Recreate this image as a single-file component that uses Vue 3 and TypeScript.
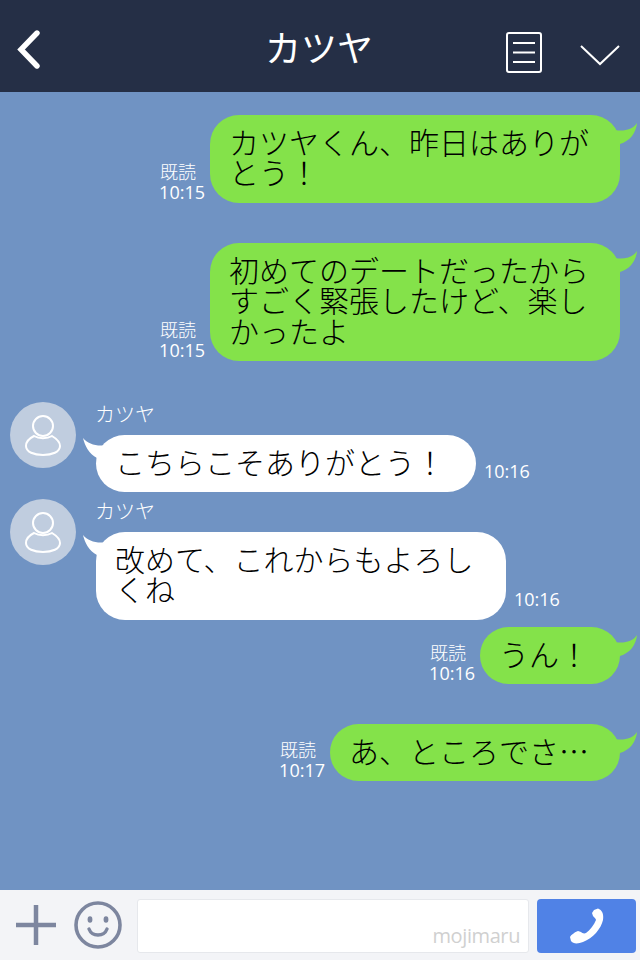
<script setup lang="ts">
interface Message {
  id: number
  mine: boolean
  text: string
  time: string
  name?: string
  gap: number
}

// gap = 前のメッセージとの間隔
const messages: Message[] = [
  { id: 1, mine: true, text: 'カツヤくん、昨日はありがとう！', time: '10:15', gap: 23 },
  { id: 2, mine: true, text: '初めてのデートだったからすごく緊張したけど、楽しかったよ', time: '10:15', gap: 40.5 },
  { id: 3, mine: false, name: 'カツヤ', text: 'こちらこそありがとう！', time: '10:16', gap: 41 },
  { id: 4, mine: false, name: 'カツヤ', text: '改めて、これからもよろしくね', time: '10:16', gap: 7 },
  { id: 5, mine: true, text: 'うん！', time: '10:16', gap: 7.5 },
  { id: 6, mine: true, text: 'あ、ところでさ…', time: '10:17', gap: 40 },
]
</script>

<template>
  <div class="screen">
    <header class="header">
      <div class="header__left">
        <svg width="26" height="40" viewBox="0 0 26 40">
          <path d="M22 3 L6 19.5 L22 36" fill="none" stroke="#fff" stroke-width="5.4" stroke-linecap="round" />
        </svg>
      </div>
      <h1 class="title">カツヤ</h1>
      <div class="header__right">
        <svg width="36" height="41" viewBox="0 0 36 41">
          <rect x="1" y="1" width="34" height="39" rx="2" fill="none" stroke="#fff" stroke-width="2" />
          <path d="M7 11 H29 M7 20.5 H29 M7 30 H29" stroke="#fff" stroke-width="2" />
        </svg>
        <svg class="chevron" width="40" height="22" viewBox="0 0 40 22">
          <path d="M1 2 L20 20 L39 2" fill="none" stroke="#fff" stroke-width="2" />
        </svg>
      </div>
    </header>

    <main class="chat">
      <div
        v-for="m in messages"
        :key="m.id"
        class="row"
        :class="m.mine ? 'row--mine' : 'row--other'"
        :style="{ marginTop: m.gap + 'px' }"
      >
        <template v-if="m.mine">
          <div class="meta meta--mine">
            <span class="read">既読</span>
            <span>{{ m.time }}</span>
          </div>
          <div class="bubble bubble--mine">
            {{ m.text }}
            <svg class="tail tail--mine" width="30" height="24" viewBox="0 0 30 24">
              <path d="M4 6 C12 9 24 8 29 0 C28 10 22 18 12 21 L4 21 Z" fill="#84e24a" />
            </svg>
          </div>
        </template>
        <template v-else>
          <div class="avatar">
            <svg width="66" height="66" viewBox="0 0 66 66">
              <circle cx="33" cy="24" r="10" fill="none" stroke="#fff" stroke-width="2" />
              <path d="M24 34 C18 37 16 41 16 44 C16 50 24 53 33 53 C42 53 50 50 50 44 C50 41 47 37 42 34 C37 37 29 37 24 34 Z" fill="none" stroke="#fff" stroke-width="2" />
            </svg>
          </div>
          <div class="other-body">
            <div class="name">{{ m.name }}</div>
            <div class="other-line">
              <div class="bubble bubble--other">
                {{ m.text }}
                <svg class="tail tail--other" width="26" height="24" viewBox="0 0 26 24">
                  <path d="M0 0 C5 6 14 9 24 7 L14 20 C6 16 2 8 0 0 Z" fill="#fff" />
                </svg>
              </div>
              <span class="meta meta--other">{{ m.time }}</span>
            </div>
          </div>
        </template>
      </div>
    </main>

    <footer class="footer">
      <svg width="40" height="40" viewBox="0 0 40 40">
        <path d="M20 0 V40 M0 20 H40" stroke="#7d869f" stroke-width="4.5" />
      </svg>
      <svg class="smile" width="48" height="48" viewBox="0 0 48 48">
        <circle cx="24" cy="24" r="22" fill="none" stroke="#7d869f" stroke-width="3.6" />
        <ellipse cx="16" cy="18.5" rx="2.4" ry="3.2" fill="#7d869f" />
        <ellipse cx="32" cy="18.5" rx="2.4" ry="3.2" fill="#7d869f" />
        <path d="M15 28 C18 36 30 36 33 28" fill="none" stroke="#7d869f" stroke-width="3.4" stroke-linecap="round" />
      </svg>
      <div class="input">
        <span class="watermark">mojimaru</span>
      </div>
      <button class="send" type="button">
        <svg width="36" height="36" viewBox="0 0 36 36">
          <path d="M25 2 L29 0.5 C33 2 35 6 34 12 C32 21 24 30 14 34 C9 36 4 36 2 33 L1 29 C2 27 6 24 9 23 L12 24 C13 25 15 26 17 25 C21 22 25 17 27 12 C27 11 25 9 24 8 L23 5 Z" fill="#fff" />
        </svg>
      </button>
    </footer>
  </div>
</template>

<style scoped>
.screen {
  display: flex;
  flex-direction: column;
  width: 640px;
  height: 960px;
  overflow: hidden;
  background: #7093c3;
  font-family: "Noto Sans CJK JP", "Open Sans", sans-serif;
}

.header {
  display: grid;
  grid-template-columns: 1fr auto 1fr;
  align-items: center;
  height: 92px;
  padding: 0 20px 0 15px;
  background: #252f46;
  box-sizing: border-box;
}

.header__left {
  display: flex;
  margin-top: 8px;
}

.header__right {
  display: flex;
  align-items: center;
  justify-content: flex-end;
  gap: 38px;
  margin-top: 12px;
}

.chevron {
  margin-top: 6px;
}

.title {
  margin: 0;
  color: #fff;
  font-size: 36px;
  font-weight: 400;
  line-height: 92px;
  text-align: center;
  padding-left: 3px;
}

.chat {
  flex: 1;
}

.row {
  display: flex;
}

.row--mine {
  justify-content: flex-end;
  align-items: flex-end;
  padding-right: 20px;
}

.row--other {
  padding-left: 10px;
}

.bubble {
  position: relative;
  box-sizing: border-box;
  max-width: 410px;
  padding: 10.5px 31px 16px 19px;
  border-radius: 29px;
  color: #000;
  font-size: 30px;
  font-weight: 300;
  line-height: 30.5px;
  line-break: strict;
}

.bubble--mine {
  background: #84e24a;
}

.bubble--other {
  background: #fff;
}

.tail {
  position: absolute;
}

.tail--mine {
  top: 8px;
  right: -18px;
}

.tail--other {
  top: 3px;
  left: -13px;
}

.meta {
  color: #fff;
  font-family: "Open Sans", "Noto Sans CJK JP", sans-serif;
  font-size: 18px;
  line-height: 20px;
}

.meta--mine {
  display: flex;
  flex-direction: column;
  margin-right: 5px;
  margin-bottom: 1px;
}

.read {
  font-weight: 300;
  padding-left: 1px;
}

.meta--other {
  margin-left: 8px;
  margin-bottom: 11px;
}

.avatar {
  flex: none;
  width: 66px;
  height: 66px;
  border-radius: 50%;
  background: #c0cddf;
}

.other-body {
  margin-left: 20px;
}

.name {
  color: #fff;
  font-size: 20px;
  font-weight: 300;
  line-height: 24px;
  margin-bottom: 9px;
  margin-left: -1px;
}

.other-line {
  display: flex;
  align-items: flex-end;
}

.footer {
  display: flex;
  align-items: center;
  height: 70px;
  padding: 0 4px 0 16px;
  box-sizing: border-box;
  background: #f3f4f7;
}

.footer > svg {
  flex: none;
}

.smile {
  margin-left: 18px;
}

.input {
  position: relative;
  flex: none;
  width: 392px;
  height: 54px;
  margin-left: 15px;
  margin-top: 1px;
  box-sizing: border-box;
  border: 1px solid #e6e8ec;
  border-radius: 3px;
  background: #fff;
}

.watermark {
  position: absolute;
  right: 8px;
  bottom: 3px;
  color: #d0d0d0;
  font-family: "Open Sans", sans-serif;
  font-size: 20px;
  letter-spacing: -0.4px;
}

.send {
  display: flex;
  flex: none;
  align-items: center;
  justify-content: center;
  width: 99px;
  height: 54px;
  margin-left: 8px;
  margin-top: 1px;
  padding: 0;
  border: 0;
  border-radius: 4px;
  background: #5082e6;
}
</style>
